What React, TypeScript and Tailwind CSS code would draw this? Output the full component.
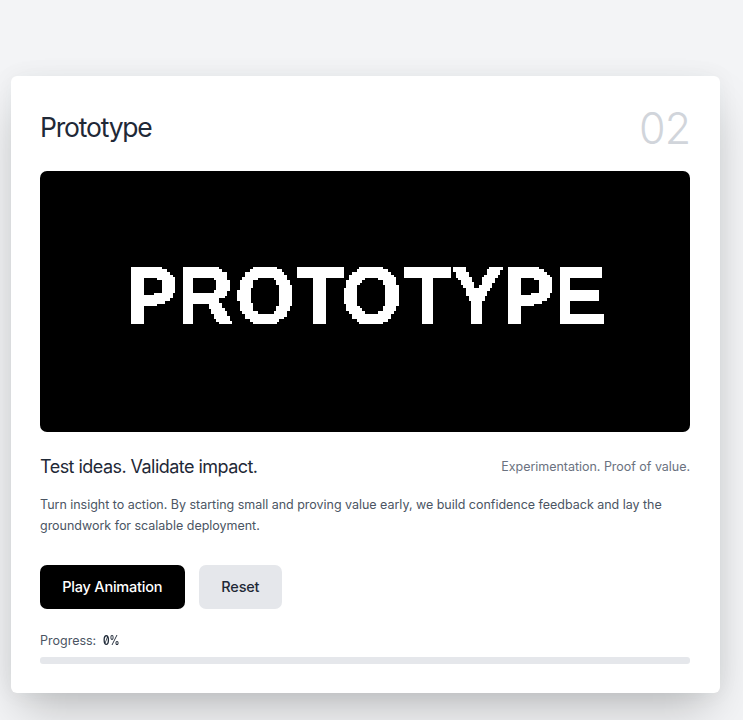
const CELL = 2.6;
const TILE = 13;
const samples = [0, 1, 2, 3, 4].map((i) => Math.floor(i * CELL + 1));

function PixelFilter() {
  return (
    <svg className="absolute h-0 w-0" aria-hidden="true">
      <filter id="pixelate" filterUnits="userSpaceOnUse" primitiveUnits="userSpaceOnUse" x="0" y="0" width="650" height="260" colorInterpolationFilters="sRGB">
        {samples.map((p) => (
          <feFlood key={`c${p}`} x={p} y="0" width="1" height={TILE} floodColor="white" result={`c${p}`} />
        ))}
        <feMerge x="0" y="0" width={TILE} height={TILE} result="cols">
          {samples.map((p) => (
            <feMergeNode key={p} in={`c${p}`} />
          ))}
        </feMerge>
        {samples.map((p) => (
          <feFlood key={`r${p}`} x="0" y={p} width={TILE} height="1" floodColor="white" result={`r${p}`} />
        ))}
        <feMerge x="0" y="0" width={TILE} height={TILE} result="rows">
          {samples.map((p) => (
            <feMergeNode key={p} in={`r${p}`} />
          ))}
        </feMerge>
        <feComposite in="cols" in2="rows" operator="in" x="0" y="0" width={TILE} height={TILE} result="dots" />
        <feTile in="dots" x="0" y="0" width="650" height="260" result="grid" />
        <feComponentTransfer in="SourceGraphic" x="0" y="0" width="650" height="260" result="hard">
          <feFuncA type="discrete" tableValues="0 1" />
        </feComponentTransfer>
        <feComposite in="hard" in2="grid" operator="in" x="0" y="0" width="650" height="260" result="sampled" />
        <feMorphology in="sampled" operator="dilate" radius="1" x="0" y="0" width="650" height="260" />
      </filter>
    </svg>
  );
}

export default function App() {
  return (
    <div className="h-[720px] w-[743px] overflow-hidden bg-[#f3f4f6] pt-[76px] pl-[11px] font-['Inter','Liberation_Sans',sans-serif]">
      <PixelFilter />
      <main className="flex h-[617px] w-[709px] flex-col rounded-[6px] bg-white pt-[29px] pr-[30px] pl-[29px] shadow-[0_23px_46px_-11px_rgba(0,0,0,0.25),0_0_22px_rgba(30,60,60,0.05)]">
        <header className="flex h-[66px] items-start justify-between">
          <h1 className="pt-[4px] text-[26.5px] leading-[36px] tracking-[-1.2px] text-[#1f2937]">Prototype</h1>
          <span className="-mr-[0.5px] text-[43px] leading-[46px] font-light tracking-[-0.7px] text-[#d1d5db]">02</span>
        </header>
        <div className="relative h-[261px] shrink-0 overflow-hidden rounded-[7px] bg-black">
          <div className="h-[260px] w-[650px] [filter:url(#pixelate)]">
            <div className="origin-top scale-y-[1.035] pt-[82.5px] pl-[86px] font-['Liberation_Sans',Arial,sans-serif] text-[76.5px] leading-[76px] font-bold tracking-[0.7px] whitespace-nowrap text-white [-webkit-text-stroke:0.9px_white] [font-kerning:none]">
              P<span className="tracking-[2.6px]">R</span>
              <span className="tracking-[1.6px]">O</span>
              <span className="tracking-[-1.4px]">T</span>
              <span className="tracking-[2.4px]">O</span>TYPE
            </div>
          </div>
        </div>
        <div className="mt-[20px] flex h-[30px] items-center justify-between">
          <h2 className="text-[18px] leading-[28px] tracking-[-0.54px] text-[#1f2937]">Test ideas. Validate impact.</h2>
          <p className="text-[12.5px] leading-[18px] font-[430] tracking-[-0.03px] text-[#6b7280]">Experimentation. Proof of value.</p>
        </div>
        <p className="mt-[13px] text-[12.5px] leading-[20.6px] font-[430] tracking-[-0.02px] text-[#4b5563]">
          Turn insight to action. By starting small and proving value early, we build confidence feedback and lay the
          <br />
          groundwork for scalable deployment.
        </p>
        <div className="mt-[29px] flex h-[44px] gap-[14.6px]">
          <button className="w-[144.5px] rounded-[7px] bg-black text-[14.5px] font-medium tracking-[-0.2px] text-white">Play Animation</button>
          <button className="w-[82.5px] rounded-[7px] bg-[#e5e7eb] text-[14.5px] font-medium tracking-[-0.2px] text-[#1f2937]">Reset</button>
        </div>
        <div className="mt-[23px] flex h-[18px] items-center text-[12.5px] font-[430] text-[#4b5563]">
          Progress:
          <span className="ml-[7px] inline-block origin-left scale-x-[0.8] text-[12.5px] font-semibold text-[#1f2937] [font-feature-settings:'zero']">0%</span>
        </div>
        <div className="mt-[7px] h-[7px] rounded-[3px] bg-[#e5e7eb]" />
      </main>
    </div>
  );
}
